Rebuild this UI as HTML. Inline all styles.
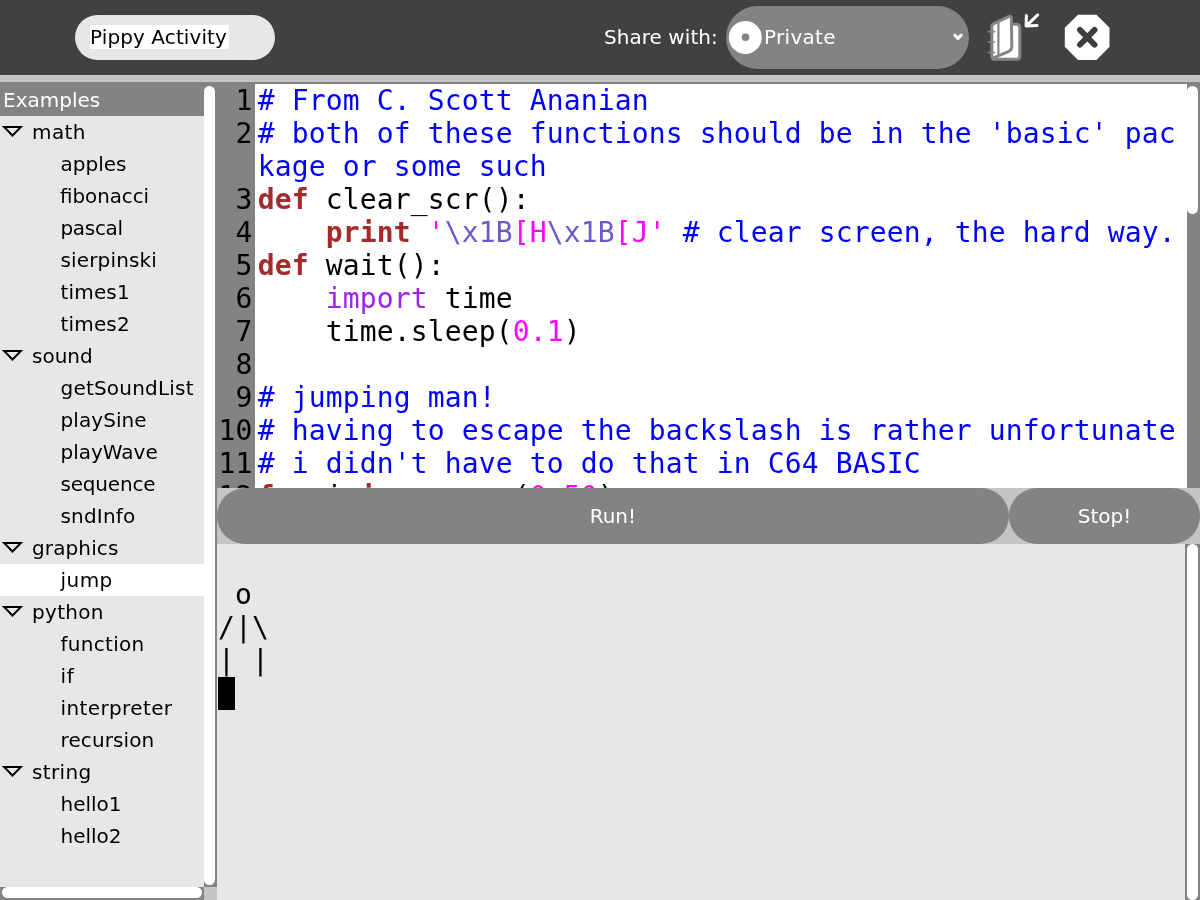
<!DOCTYPE html>
<html lang="en">
<head>
<meta charset="utf-8">
<title>Pippy Activity</title>
<style>
html,body{margin:0;padding:0;}
body{width:1200px;height:900px;overflow:hidden;position:relative;background:#e7e7e7;font-family:"DejaVu Sans","Liberation Sans",sans-serif;font-size:20px;color:#000;}
#root{position:absolute;left:0;top:0;width:1200px;height:900px;overflow:hidden;will-change:transform;}
.abs{position:absolute;}
#toolbar{left:0;top:0;width:1200px;height:75px;background:#424142;}
#strip{left:0;top:75px;width:1200px;height:9px;background:#c6c3c6;}
#title{left:75px;top:15px;width:200px;height:45px;border-radius:23px;background:#e7e7e7;}
#title span{position:absolute;left:15px;top:10px;height:24px;line-height:24px;background:#fff;padding:0;width:139px;white-space:nowrap;letter-spacing:0.1px;}
#share{left:604px;top:25px;letter-spacing:0.05px;color:#fff;white-space:nowrap;line-height:24px;}
#combo{left:726px;top:6px;width:243px;height:63px;border-radius:32px;background:#848284;}
#combo .lbl{position:absolute;left:38px;top:19px;letter-spacing:0.3px;color:#fff;line-height:24px;}
/* left panel */
#hdr{left:0;top:82px;width:255px;height:34px;background:#848284;}
#hdr span{position:absolute;left:3px;top:6px;color:#fff;line-height:24px;}
#tree{left:0;top:116px;width:204px;height:771px;background:#e7e7e7;}
.row{position:absolute;left:0;width:204px;height:32px;line-height:32px;white-space:nowrap;}
.row.p span{position:absolute;left:32px;top:0;}
.row.c span{position:absolute;left:60.5px;top:0;}
.row.sel{background:#fff;}
.row svg{position:absolute;left:0;top:0;}
.grey{background:#848284;}
.wht{background:#fff;}
/* editor */
#gutter{left:217px;top:84px;width:38px;height:404px;background:#848284;overflow:hidden;}
#code{left:255px;top:84px;width:932px;height:404px;background:#fff;overflow:hidden;}
.mono{font-family:"DejaVu Sans Mono","Liberation Mono",monospace;font-size:28px;line-height:33px;white-space:pre;letter-spacing:0.1425px;}
.ln{position:absolute;right:2.5px;text-align:right;}
.cl{position:absolute;left:2.75px;}
.cm{color:#0000ff;}
.kw{color:#a52a2a;font-weight:bold;}
.st{color:#ff00ff;}
.es{color:#6a5acd;}
.im{color:#a020f0;}
.nu{color:#ff00ff;}
#btnrow{left:217px;top:488px;width:983px;height:56px;background:#c6c3c6;}
.btn{position:absolute;top:0;height:56px;border-radius:28px;background:#848284;color:#fff;text-align:center;line-height:56px;}
#term{left:217px;top:544px;width:968px;height:356px;background:#e7e7e7;overflow:hidden;}
</style>
</head>
<body>
<div id="root">
<div id="toolbar" class="abs"></div>
<div id="strip" class="abs"></div>
<div id="title" class="abs"><span>Pippy Activity</span></div>
<div id="share" class="abs">Share with:</div>
<div id="combo" class="abs"><span class="lbl">Private</span></div>

<div id="hdr" class="abs"><span>Examples</span></div>
<div id="tree" class="abs">
<div class="row p" style="top:0px"><svg width="32" height="32" viewBox="0 0 32 32"><path d="M1.7 9.9 H23.2 L12.45 21.1 Z M6.5 12 H18.5 L12.5 18.1 Z" fill="#000" fill-rule="evenodd"/></svg><span style="letter-spacing:0.4px">math</span></div>
<div class="row c" style="top:32px"><span>apples</span></div>
<div class="row c" style="top:64px"><span style="transform:scaleX(0.99);transform-origin:0 0;margin-left:-1px">fibonacci</span></div>
<div class="row c" style="top:96px"><span style="letter-spacing:-0.33px">pascal</span></div>
<div class="row c" style="top:128px"><span style="letter-spacing:0.15px">sierpinski</span></div>
<div class="row c" style="top:160px"><span style="letter-spacing:0.17px">times1</span></div>
<div class="row c" style="top:192px"><span style="letter-spacing:0.17px">times2</span></div>
<div class="row p" style="top:224px"><svg width="32" height="32" viewBox="0 0 32 32"><path d="M1.7 9.9 H23.2 L12.45 21.1 Z M6.5 12 H18.5 L12.5 18.1 Z" fill="#000" fill-rule="evenodd"/></svg><span>sound</span></div>
<div class="row c" style="top:256px"><span style="letter-spacing:0.2px">getSoundList</span></div>
<div class="row c" style="top:288px"><span style="letter-spacing:0.08px">playSine</span></div>
<div class="row c" style="top:320px"><span>playWave</span></div>
<div class="row c" style="top:352px"><span style="letter-spacing:-0.19px">sequence</span></div>
<div class="row c" style="top:384px"><span style="letter-spacing:0.19px">sndInfo</span></div>
<div class="row p" style="top:416px"><svg width="32" height="32" viewBox="0 0 32 32"><path d="M1.7 9.9 H23.2 L12.45 21.1 Z M6.5 12 H18.5 L12.5 18.1 Z" fill="#000" fill-rule="evenodd"/></svg><span style="letter-spacing:0.12px">graphics</span></div>
<div class="row c sel" style="top:448px"><span style="letter-spacing:0.45px">jump</span></div>
<div class="row p" style="top:480px"><svg width="32" height="32" viewBox="0 0 32 32"><path d="M1.7 9.9 H23.2 L12.45 21.1 Z M6.5 12 H18.5 L12.5 18.1 Z" fill="#000" fill-rule="evenodd"/></svg><span style="letter-spacing:0.3px">python</span></div>
<div class="row c" style="top:512px"><span style="letter-spacing:0.3px">function</span></div>
<div class="row c" style="top:544px"><span style="letter-spacing:0.6px">if</span></div>
<div class="row c" style="top:576px"><span style="letter-spacing:0.38px">interpreter</span></div>
<div class="row c" style="top:608px"><span style="letter-spacing:0.11px">recursion</span></div>
<div class="row p" style="top:640px"><svg width="32" height="32" viewBox="0 0 32 32"><path d="M1.7 9.9 H23.2 L12.45 21.1 Z M6.5 12 H18.5 L12.5 18.1 Z" fill="#000" fill-rule="evenodd"/></svg><span style="letter-spacing:0.37px">string</span></div>
<div class="row c" style="top:672px"><span>hello1</span></div>
<div class="row c" style="top:704px"><span>hello2</span></div>
</div>


<svg class="abs" style="left:0;top:0" width="1200" height="75" viewBox="0 0 1200 75">
<circle cx="745.3" cy="37.4" r="16.5" fill="#fff"/>
<circle cx="745.5" cy="37.3" r="3.8" fill="#848284"/>
<path d="M955 35.3 L958 38.4 L961.1 35.3" fill="none" stroke="#fff" stroke-width="3.2" stroke-linecap="round" stroke-linejoin="round"/>
<g fill="#fff" stroke="#848684" stroke-width="3" stroke-linejoin="round" stroke-linecap="round">
<path d="M1010 24.3 L1016.5 24.3 Q1019.8 24.3 1019.8 27.5 L1019.8 56.2 Q1019.8 59.3 1016.6 59.3 L993 59.3 L993 40 Z"/>
<path d="M991.9 26.2 Q991.9 24.6 993.4 23.9 L1008.6 16.6 Q1011.3 15.6 1011.4 18.4 L1011.8 46.6 Q1011.8 50.2 1008.4 51.6 L994 57.6 Q991.9 58.4 991.9 56.4 Z"/>
<path d="M998.4 23 L998.4 56" fill="none" stroke-width="2.2"/>
</g>
<path d="M988.2 31.6 H994.6 M988.2 42 H994.6 M988.2 52.5 H994.6" fill="none" stroke="#848684" stroke-width="1.6" stroke-linecap="round"/>
<path d="M1037.7 14.9 L1026.8 25.3 M1026.4 15.4 L1026.1 25.9 L1037 25.5" fill="none" stroke="#fff" stroke-width="3" stroke-linecap="round" stroke-linejoin="round"/>
<path d="M1078 14.8 H1096.5 L1109.5 27.8 V46.8 L1096.5 60 H1078 L1064.8 46.8 V27.8 Z" fill="#fff"/>
<path d="M1079.9 29.9 L1094.6 44.7 M1094.6 29.9 L1079.9 44.7" fill="none" stroke="#3c3e3c" stroke-width="5.8" stroke-linecap="round"/>
</svg>
<div class="abs grey" style="left:0;top:82px;width:1200px;height:2px"></div>
<div class="abs grey" style="left:204px;top:84px;width:13px;height:803px"></div>
<div class="abs wht" style="left:204px;top:86px;width:11px;height:799px;border-radius:5.5px"></div>
<div class="abs grey" style="left:0;top:887px;width:204px;height:13px"></div>
<div class="abs wht" style="left:2px;top:887px;width:200px;height:11px;border-radius:5.5px"></div>
<div class="abs" style="left:204px;top:887px;width:13px;height:13px;background:#c6c3c6"></div>
<div class="abs grey" style="left:1187px;top:84px;width:13px;height:404px"></div>
<div class="abs wht" style="left:1187px;top:86px;width:11px;height:128px;border-radius:5.5px"></div>
<div class="abs grey" style="left:1185px;top:544px;width:15px;height:356px"></div>
<div class="abs wht" style="left:1187px;top:544px;width:11px;height:356px;border-radius:5.5px"></div>
<div id="gutter" class="abs mono">
<div class="ln" style="top:0px">1</div>
<div class="ln" style="top:33px">2</div>
<div class="ln" style="top:99px">3</div>
<div class="ln" style="top:132px">4</div>
<div class="ln" style="top:165px">5</div>
<div class="ln" style="top:198px">6</div>
<div class="ln" style="top:231px">7</div>
<div class="ln" style="top:264px">8</div>
<div class="ln" style="top:297px">9</div>
<div class="ln" style="top:330px">10</div>
<div class="ln" style="top:363px">11</div>
<div class="ln" style="top:396px">12</div>
</div>
<div id="code" class="abs mono">
<div class="cl" style="top:0px"><span class="cm"># From C. Scott Ananian</span></div>
<div class="cl" style="top:33px"><span class="cm"># both of these functions should be in the 'basic' pac</span></div>
<div class="cl" style="top:66px"><span class="cm">kage or some such</span></div>
<div class="cl" style="top:99px"><span class="kw">def</span> clear_scr():</div>
<div class="cl" style="top:132px">    <span class="kw">print</span> <span class="st">'</span><span class="es">\x1B</span><span class="st">[H</span><span class="es">\x1B</span><span class="st">[J'</span> <span class="cm"># clear screen, the hard way.</span></div>
<div class="cl" style="top:165px"><span class="kw">def</span> wait():</div>
<div class="cl" style="top:198px">    <span class="im">import</span> time</div>
<div class="cl" style="top:231px">    time.sleep(<span class="nu">0.1</span>)</div>
<div class="cl" style="top:297px"><span class="cm"># jumping man!</span></div>
<div class="cl" style="top:330px"><span class="cm"># having to escape the backslash is rather unfortunate</span></div>
<div class="cl" style="top:363px"><span class="cm"># i didn't have to do that in C64 BASIC</span></div>
<div class="cl" style="top:396px"><span class="kw">for</span> i <span class="kw">in</span> xrange(<span class="nu">0</span>,<span class="nu">50</span>):</div>
</div>
<div id="btnrow" class="abs"><div class="btn" style="left:0;width:791.7px;">Run!</div><div class="btn" style="left:792px;width:191px;">Stop!</div></div>
<div id="term" class="abs mono">
<div class="cl" style="left:1px;top:34px"> o</div>
<div class="cl" style="left:1px;top:67px">/|\</div>
<div class="cl" style="left:1px;top:100px">| |</div>
<div class="abs" style="left:1px;top:133px;width:17px;height:33px;background:#000"></div>
</div>
</div>
</body>
</html>
